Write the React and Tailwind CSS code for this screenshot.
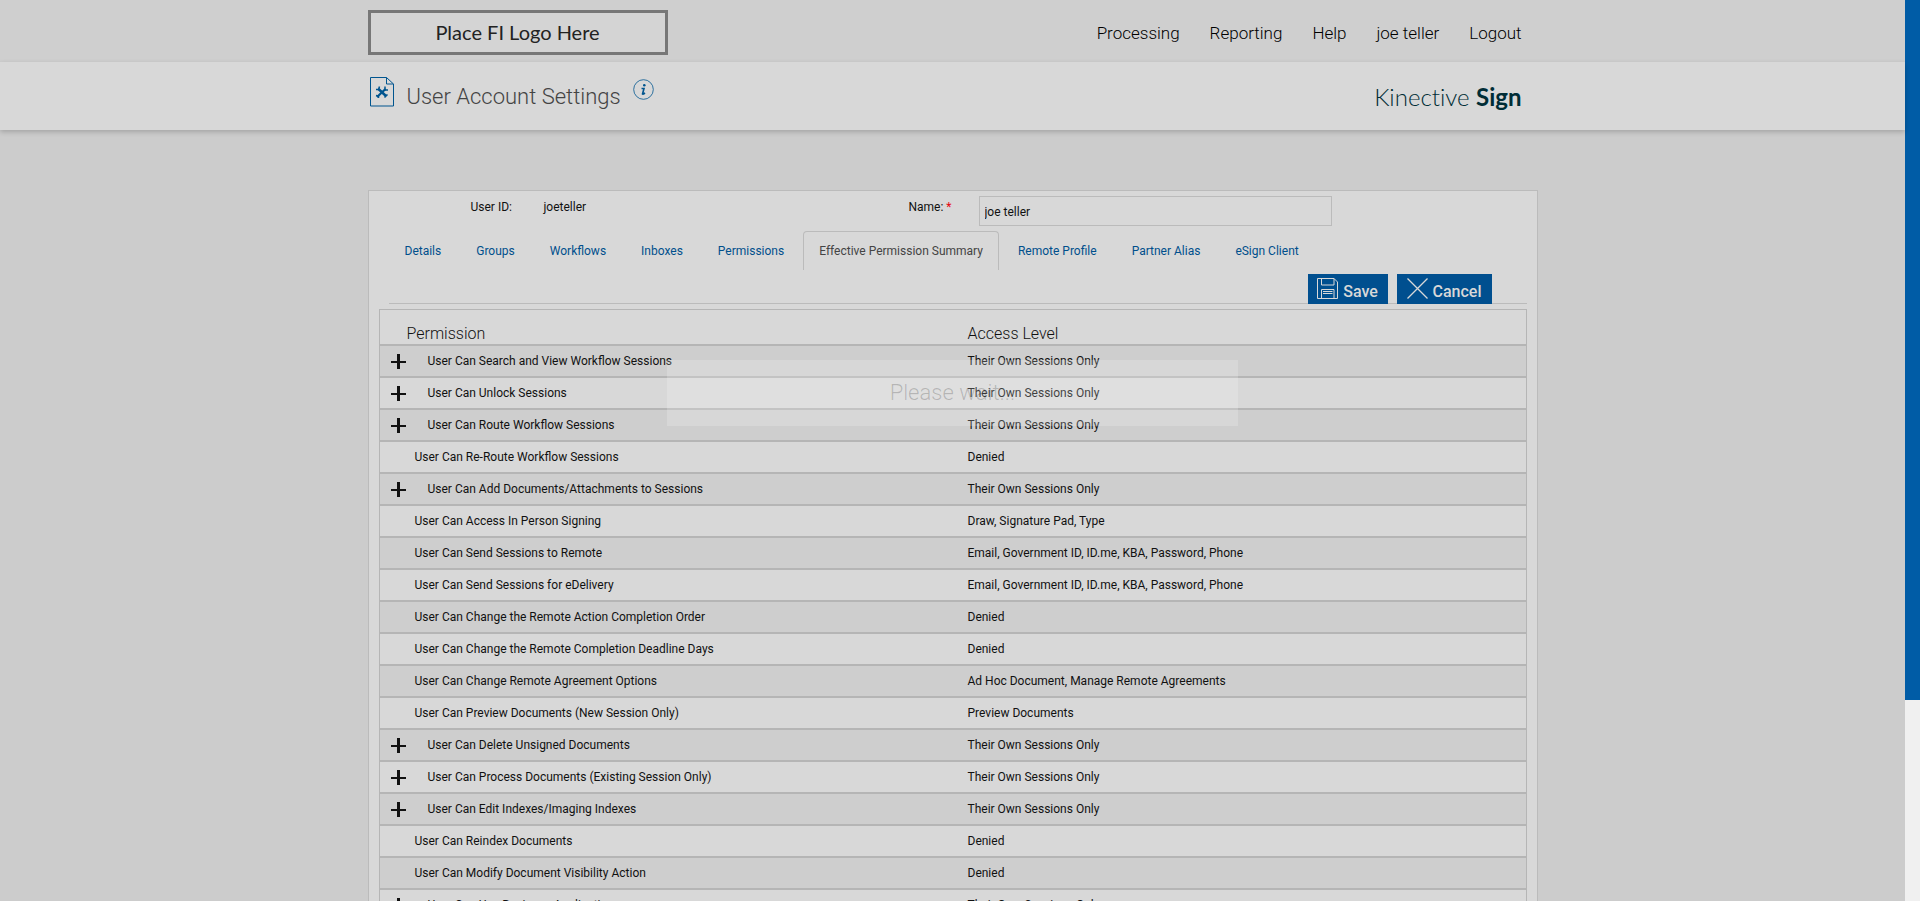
import React, { useState } from 'react';

const navLinks = ['Processing', 'Reporting', 'Help', 'joe teller', 'Logout'];

const tabs = [
  'Details',
  'Groups',
  'Workflows',
  'Inboxes',
  'Permissions',
  'Effective Permission Summary',
  'Remote Profile',
  'Partner Alias',
  'eSign Client',
];

const OWN = 'Their Own Sessions Only';

const permissions = [
  { name: 'User Can Search and View Workflow Sessions', access: OWN, expandable: true },
  { name: 'User Can Unlock Sessions', access: OWN, expandable: true },
  { name: 'User Can Route Workflow Sessions', access: OWN, expandable: true },
  { name: 'User Can Re-Route Workflow Sessions', access: 'Denied' },
  { name: 'User Can Add Documents/Attachments to Sessions', access: OWN, expandable: true },
  { name: 'User Can Access In Person Signing', access: 'Draw, Signature Pad, Type' },
  { name: 'User Can Send Sessions to Remote', access: 'Email, Government ID, ID.me, KBA, Password, Phone' },
  { name: 'User Can Send Sessions for eDelivery', access: 'Email, Government ID, ID.me, KBA, Password, Phone' },
  { name: 'User Can Change the Remote Action Completion Order', access: 'Denied' },
  { name: 'User Can Change the Remote Completion Deadline Days', access: 'Denied' },
  { name: 'User Can Change Remote Agreement Options', access: 'Ad Hoc Document, Manage Remote Agreements' },
  { name: 'User Can Preview Documents (New Session Only)', access: 'Preview Documents' },
  { name: 'User Can Delete Unsigned Documents', access: OWN, expandable: true },
  { name: 'User Can Process Documents (Existing Session Only)', access: OWN, expandable: true },
  { name: 'User Can Edit Indexes/Imaging Indexes', access: OWN, expandable: true },
  { name: 'User Can Reindex Documents', access: 'Denied' },
  { name: 'User Can Modify Document Visibility Action', access: 'Denied' },
  { name: 'User Can Use Business Applications', access: OWN, expandable: true },
];

function SettingsIcon() {
  return (
    <svg width="24" height="30" viewBox="0 0 24 30" fill="none" stroke="#00558f" aria-hidden="true">
      <path d="M.5.5h16l7 6.500v22H.5z" />
      <path d="M16.500.5v6.500h7" />
      <path d="M8.500 12l7.500 7" strokeWidth="2.500" />
      <path d="M15.500 12L7 20" strokeWidth="2.200" />
      <path d="M6 12.500h2.500L9.500 9.500M15 9.500v3.500h3M6 18.500l2.500.500v2M14.500 20.500l3-3" strokeWidth="1.500" />
    </svg>
  );
}

function InfoIcon() {
  return (
    <svg width="21" height="21" viewBox="0 0 21 21" fill="none" aria-hidden="true">
      <circle cx="10.500" cy="10.500" r="9.800" stroke="#00558f" strokeWidth="0.800" />
      <circle cx="11.300" cy="6.300" r="1.300" fill="#00558f" />
      <path d="M8.500 9.500h2.500l-1.500 5.500q.5.500 2.500-1" stroke="#00558f" strokeWidth="1.600" />
    </svg>
  );
}

function SaveIcon() {
  return (
    <svg width="21" height="21" viewBox="0 0 21 21" fill="none" stroke="#d8d8d8" aria-hidden="true">
      <path d="M.5.5h16.500l3.500 3.500v16.500H.5z" />
      <path d="M4.500.5v6.500h12.500V.5M4.500 20.500v-9h12.500v9M6 13.500h9.500M6 15.500h9.500" />
    </svg>
  );
}

function CancelIcon() {
  return (
    <svg width="21" height="21" viewBox="0 0 21 21" fill="none" stroke="#d8d8d8" strokeWidth="1.300" aria-hidden="true">
      <path d="M.5.5l20 20M20.500.5l-20 20" />
    </svg>
  );
}

function PlusIcon() {
  return (
    <svg width="15" height="15" viewBox="0 0 15 15" stroke="#111" aria-hidden="true">
      <path d="M7.500 0v15" strokeWidth="3" />
      <path d="M0 8h15" strokeWidth="2" />
    </svg>
  );
}

function App() {
  const [name, setName] = useState('joe teller');
  const [activeTab, setActiveTab] = useState('Effective Permission Summary');

  return (
    <div className="flex h-screen overflow-hidden bg-[#cccccc] font-['Roboto',sans-serif] text-xs text-[#111]">
      <div className="relative min-w-0 flex-1">
        <header className="bg-[#cfcfcf]">
          <div className="mx-auto flex h-[62px] max-w-[1170px] items-center justify-between pt-[3px]">
            <div className="flex h-[45px] w-[300px] items-center justify-center border-3 border-[#777] bg-[#d4d4d4] pb-[2px] font-['Lato',sans-serif] text-xl text-[#222]">
              Place FI Logo Here
            </div>
            <nav className="flex gap-[30px] pt-[2px] pr-4 text-[17px] font-light text-black">
              {navLinks.map((link) => (
                <a key={link} href="#">{link}</a>
              ))}
            </nav>
          </div>
        </header>

        <div className="bg-[#d8d8d8] shadow-[0_2px_5px_rgba(0,0,0,0.2)]">
          <div className="mx-auto flex h-[68px] max-w-[1170px] items-center justify-between pr-4">
            <div className="flex items-center pl-[2px]">
              <span className="mb-2"><SettingsIcon /></span>
              <h1 className="ml-[13px] pt-[2px] text-[22px] font-light text-[#444]">User Account Settings</h1>
              <button type="button" aria-label="Help" className="mb-[14px] ml-3"><InfoIcon /></button>
            </div>
            <div className="pt-[2px] font-['Lato',sans-serif] text-2xl font-light text-[#002d36] [font-variant-ligatures:none]">
              Kinective <span className="font-bold">Sign</span>
            </div>
          </div>
        </div>

        <main className="mx-auto mt-[60px] max-w-[1170px] border border-[#bbb] bg-[#d8d8d8] px-[10px]">
          <div className="flex h-[38px] pt-[5px]">
            <div className="w-[165px] pt-[3px] pl-[92px] leading-4">User ID:</div>
            <div className="w-[365px] pt-[3px] leading-4">joeteller</div>
            <label htmlFor="name" className="w-[70px] pt-[3px] leading-4">
              Name: <span className="text-red-600">*</span>
            </label>
            <input
              id="name"
              type="text"
              value={name}
              onChange={(e) => setName(e.target.value)}
              className="h-[30px] w-[353px] border border-[#bbb] px-[5px] pt-[2px]"
            />
          </div>

          <div className="flex gap-[3px] pt-[2px] pl-[10px]">
            {tabs.map((tab) => (
              <button
                key={tab}
                type="button"
                onClick={() => setActiveTab(tab)}
                className={
                  tab === activeTab
                    ? 'h-[39px] rounded-t border border-b-0 border-[#bbb] px-[15px] text-[#444]'
                    : 'h-[39px] border border-b-0 border-transparent px-[15px] text-[#004f8c]'
                }
              >
                {tab}
              </button>
            ))}
          </div>

          <div className="ml-[10px] flex h-[34px] items-end justify-end gap-[9px] border-b border-[#bbb] pr-[35px]">
            <button type="button" className="-mb-px flex h-[30px] w-20 items-center justify-center gap-[5px] bg-[#004f8f] text-base font-medium text-[#d8d8d8]">
              <span className="mb-[2px]"><SaveIcon /></span>
              <span className="pt-[5px]">Save</span>
            </button>
            <button type="button" className="-mb-px flex h-[30px] w-[95px] items-center justify-center gap-[5px] bg-[#004f8f] text-base font-medium text-[#d8d8d8]">
              <span className="mb-[2px]"><CancelIcon /></span>
              <span className="pt-[5px]">Cancel</span>
            </button>
          </div>

          <table className="mt-[5px] w-full table-fixed border-separate border-spacing-0 border border-[#b5b5b5]">
            <thead>
              <tr className="h-[34px] text-left text-base">
                <th className="w-1/2 border-b border-[#b5b5b5] pt-[14px] pl-[27px] font-light leading-5">Permission</th>
                <th className="border-b border-[#b5b5b5] pt-[14px] pl-[15px] font-light leading-5">Access Level</th>
              </tr>
            </thead>
            <tbody>
              {permissions.map((p) => (
                <tr key={p.name} className="h-8 odd:bg-[#cecece]">
                  <td className="border-y border-[#b5b5b5]">
                    <div className={p.expandable ? 'flex items-center gap-[22px] pl-[11px]' : 'pl-[35px]'}>
                      {p.expandable && (
                        <button type="button" aria-label="Expand"><PlusIcon /></button>
                      )}
                      <span>{p.name}</span>
                    </div>
                  </td>
                  <td className="border-y border-[#b5b5b5] pl-[15px]">{p.access}</td>
                </tr>
              ))}
            </tbody>
          </table>
        </main>

        <div
          role="status"
          className="absolute inset-x-0 top-[360px] mx-auto flex h-[66px] w-[30%] items-center justify-center bg-white/20 text-[22px] font-light text-black/20"
        >
          Please wait...
        </div>
      </div>

      <div className="w-[15px] bg-[#f0f0f0]">
        <div className="h-[700px] bg-[#005ca6]" />
      </div>
    </div>
  );
}

export default App;
